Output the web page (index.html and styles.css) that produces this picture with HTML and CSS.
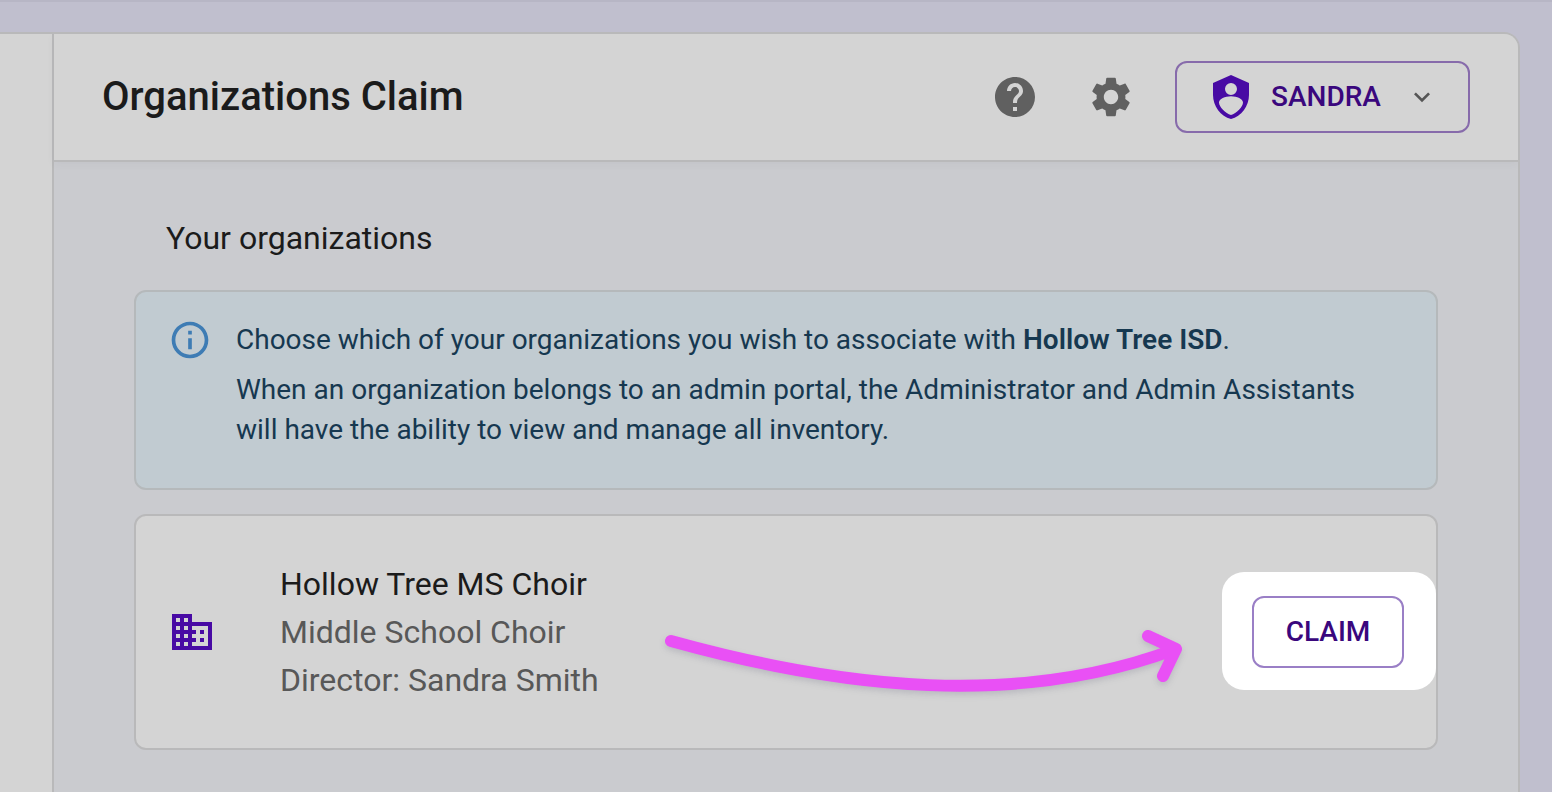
FILE: index.html
```html
<!DOCTYPE html>
<html lang="en">
<head>
<meta charset="utf-8">
<meta name="viewport" content="width=device-width, initial-scale=1">
<title>Organizations Claim</title>
<link rel="stylesheet" href="styles.css">
</head>
<body>
<div class="shell">
  <aside class="sidebar" aria-label="Sidebar"></aside>
  <div class="page">
    <header class="header">
      <h1 class="header-title">Organizations Claim</h1>
      <div class="header-actions">
        <button class="icon-button" type="button" aria-label="Help">
          <svg class="icon" viewBox="0 0 24 24" aria-hidden="true"><path d="M12 2C6.48 2 2 6.48 2 12s4.48 10 10 10 10-4.48 10-10S17.52 2 12 2zm1 17h-2v-2h2v2zm2.070-7.750l-.9.92C13.450 12.900 13 13.500 13 15h-2v-.5c0-1.100.450-2.100 1.170-2.830l1.240-1.260c.370-.360.590-.860.590-1.410 0-1.100-.9-2-2-2s-2 .9-2 2H8c0-2.210 1.790-4 4-4s4 1.790 4 4c0 .880-.360 1.680-.930 2.250z"/></svg>
        </button>
        <button class="icon-button" type="button" aria-label="Settings">
          <svg class="icon" viewBox="0 0 24 24" aria-hidden="true"><path d="M19.140 12.940c.040-.3.060-.610.060-.940 0-.320-.020-.640-.070-.940l2.030-1.580c.180-.140.230-.410.120-.610l-1.920-3.320c-.120-.220-.370-.290-.590-.220l-2.390.960c-.5-.380-1.030-.7-1.620-.940l-.360-2.540c-.040-.240-.240-.410-.480-.410h-3.840c-.240 0-.430.170-.470.410l-.360 2.540c-.590.240-1.130.570-1.620.940l-2.390-.960c-.220-.080-.470 0-.590.220L2.740 8.870c-.120.210-.080.470.120.610l2.030 1.580c-.050.3-.090.630-.090.940s.020.640.070.940l-2.030 1.580c-.180.140-.230.410-.120.610l1.920 3.320c.120.220.370.290.590.220l2.390-.960c.5.380 1.030.7 1.620.940l.360 2.540c.050.240.240.410.480.410h3.840c.240 0 .440-.170.470-.410l.360-2.540c.590-.240 1.130-.560 1.620-.940l2.390.960c.220.080.470 0 .590-.220l1.920-3.320c.120-.220.070-.470-.120-.610l-2.010-1.580zM12 15.600c-1.980 0-3.600-1.620-3.600-3.600s1.620-3.600 3.600-3.600 3.600 1.620 3.600 3.600-1.620 3.600-3.600 3.600z"/></svg>
        </button>
        <button class="outlined-button user-button" type="button" aria-haspopup="menu">
          <svg class="icon icon-accent" viewBox="0 0 24 24" aria-hidden="true"><path fill-rule="evenodd" d="M12 1L3 5v6c0 5.550 3.840 10.740 9 12 5.160-1.260 9-6.450 9-12V5zM12 5a3 3 0 1 1 0 6 3 3 0 0 1 0-6zM12 21C9.300 20.200 6 16.800 6 14.700c0-1.700 3-3.100 6-3.100s6 1.400 6 3.100C18 16.800 14.700 20.200 12 21z"/></svg>
          <span class="user-name">SANDRA</span>
          <svg class="chevron" viewBox="0 0 24 24" aria-hidden="true"><path d="M7.410 8.590 12 13.170l4.590-4.580L18 10l-6 6-6-6z"/></svg>
        </button>
      </div>
    </header>
    <main class="content">
      <h2 class="section-title">Your organizations</h2>
      <section class="notice" aria-label="Information">
        <svg class="notice-icon" viewBox="0 0 24 24" aria-hidden="true"><path d="M11 7h2v2h-2zm0 4h2v6h-2zm1-9C6.480 2 2 6.480 2 12s4.480 10 10 10 10-4.480 10-10S17.520 2 12 2zm0 18c-4.410 0-8-3.590-8-8s3.590-8 8-8 8 3.590 8 8-3.590 8-8 8z"/></svg>
        <div class="notice-body">
          <p>Choose which of your organizations you wish to associate with <strong>Hollow Tree ISD</strong>.</p>
          <p>When an organization belongs to an admin portal, the Administrator and Admin Assistants will have the ability to view and manage all inventory.</p>
        </div>
      </section>
      <article class="organization">
        <svg class="icon icon-accent" viewBox="0 0 24 24" aria-hidden="true"><path d="M12 7V3H2v18h20V7H12zM6 19H4v-2h2v2zm0-4H4v-2h2v2zm0-4H4V9h2v2zm0-4H4V5h2v2zm4 12H8v-2h2v2zm0-4H8v-2h2v2zm0-4H8V9h2v2zm0-4H8V5h2v2zm10 12h-8v-2h2v-2h-2v-2h2v-2h-2V9h8v10zm-2-8h-2v2h2v-2zm0 4h-2v2h2v-2z"/></svg>
        <div class="organization-info">
          <h3 class="organization-name">Hollow Tree MS Choir</h3>
          <p>Middle School Choir</p>
          <p>Director: Sandra Smith</p>
        </div>
        <svg class="pointer-arrow" viewBox="0 0 540 90" aria-hidden="true"><path d="M16 21C189 69 363 88 521 29M493 16l28 13-13 27"/></svg>
        <div class="spotlight">
          <button class="outlined-button claim-button" type="button">CLAIM</button>
        </div>
      </article>
    </main>
  </div>
</div>
</body>
</html>
```
FILE: styles.css
```css
* {
  box-sizing: border-box;
}

body {
  margin: 0;
  min-height: 100vh;
  display: flex;
  padding: 30px 32px 0 0;
  border-top: 2px solid #b7b6c5;
  background: #c0bfce;
  color: #1b1b1b;
  font-family: Roboto, "Liberation Sans", sans-serif;
  font-size: 28px;
  line-height: 40px;
}

h1,
h2,
h3,
p {
  margin: 0;
}

button {
  font: inherit;
  color: inherit;
  cursor: pointer;
}

.shell {
  flex: 1;
  display: flex;
  border: 2px solid #b9b9ba;
  border-width: 2px 2px 0 0;
  border-radius: 0 16px 0 0;
  background: #cacbcf;
  overflow: hidden;
}

.sidebar {
  flex: 0 0 54px;
  border-right: 2px solid #b9b9ba;
  background: #d4d4d4;
}

.page {
  flex: 1;
  min-width: 0;
}

.header {
  display: flex;
  align-items: center;
  justify-content: space-between;
  padding: 27px 48px;
  border-bottom: 2px solid #b9b9ba;
  background: #d4d4d4;
  box-shadow: 0 2px 8px rgba(80, 90, 100, 0.06);
}

.header-title {
  font-size: 40px;
  line-height: 48px;
  font-weight: 500;
}

.header-actions {
  display: flex;
  align-items: center;
  gap: 48px;
}

.icon-button {
  display: flex;
  padding: 0;
  border: 0;
  background: none;
  color: #606060;
}

.icon {
  flex: none;
  width: 48px;
  height: 48px;
  fill: currentColor;
}

.icon-accent {
  color: #480aa4;
}

.outlined-button {
  height: 72px;
  border: 2px solid #876bab;
  border-radius: 12px;
  background: none;
  color: #3a077d;
  font-weight: 500;
}

.user-button {
  display: flex;
  align-items: center;
  gap: 16px;
  width: 295px;
  margin-left: -8px;
  padding: 0 30px;
}

.user-name {
  flex: 1;
  text-align: left;
}

.chevron {
  width: 32px;
  height: 32px;
  fill: #555;
}

.content {
  display: flex;
  flex-direction: column;
  gap: 24px;
  padding: 52px 80px 40px;
}

.section-title {
  padding: 0 32px 4px;
  font-size: 32px;
  line-height: 48px;
  font-weight: 400;
}

.notice {
  display: flex;
  align-items: flex-start;
  gap: 24px;
  padding: 28px 48px 28px 32px;
  border: 2px solid #b5b9bb;
  border-radius: 12px;
  background: #c1cbd1;
  color: #163850;
}

.notice-icon {
  flex: none;
  width: 44px;
  height: 44px;
  margin: -2px 0;
  fill: #3e7cb4;
}

.notice-body p {
  margin-bottom: 10px;
}

.notice-body strong {
  font-weight: 600;
}

.organization {
  position: relative;
  display: flex;
  align-items: center;
  gap: 64px;
  padding: 44px 0 44px 32px;
  border: 2px solid #b9b9ba;
  border-radius: 12px;
  background: #d4d4d4;
  color: #585858;
  font-size: 32px;
  line-height: 48px;
}

.organization-info {
  flex: 1;
}

.organization-name {
  color: #1b1b1b;
  font-size: 32px;
  font-weight: 400;
}

.pointer-arrow {
  position: absolute;
  top: 104px;
  right: 241px;
  width: 540px;
  height: 90px;
  overflow: visible;
  fill: none;
  stroke: #e950f5;
  stroke-width: 12px;
  stroke-linecap: round;
  stroke-linejoin: round;
  filter: drop-shadow(0 3px 3px rgba(80, 80, 110, 0.2));
}

.spotlight {
  display: flex;
  margin: -22px 0 -20px;
  padding: 24px 32px 22px 30px;
  border-radius: 22px;
  background: #fff;
}

.claim-button {
  width: 152px;
  border-color: #9a7fc6;
  font-size: 28px;
  line-height: 40px;
}
```
